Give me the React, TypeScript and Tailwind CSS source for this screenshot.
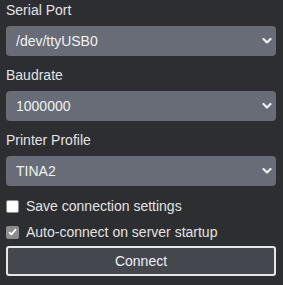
import { useState } from "react";

const font = { fontFamily: '"Liberation Sans", Arial, sans-serif' };

function Chevron() {
  return (
    <svg
      className="pointer-events-none absolute right-[4px] top-1/2 -translate-y-1/2"
      width="10"
      height="7"
      viewBox="0 0 10 7"
    >
      <path
        d="M1.5 1.5 L5 5 L8.5 1.5"
        fill="none"
        stroke="#eeeeee"
        strokeWidth="2.2"
        strokeLinecap="round"
        strokeLinejoin="round"
      />
    </svg>
  );
}

function SelectField({
  label,
  value,
  options,
  className,
}: {
  label: string;
  value: string;
  options: string[];
  className?: string;
}) {
  const [v, setV] = useState(value);
  return (
    <div className={className}>
      <div className="text-[14px] leading-[20px] text-[#e3e3e3]">{label}</div>
      <div className="relative mt-[6px]">
        <select
          value={v}
          onChange={(e) => setV(e.target.value)}
          className="block h-[30px] w-full appearance-none rounded-[4px] bg-[#676c76] pl-[10px] text-[14px] text-[#f2f2f2] outline-none"
          style={font}
        >
          {options.map((o) => (
            <option key={o}>{o}</option>
          ))}
        </select>
        <Chevron />
      </div>
    </div>
  );
}

function Check({ label, checked }: { label: string; checked: boolean }) {
  const [on, setOn] = useState(checked);
  return (
    <label
      className="flex h-[20px] cursor-pointer items-center gap-[7px] text-[14px] text-[#e3e3e3]"
      onClick={() => setOn(!on)}
    >
      {on ? (
        <span className="flex h-[13px] w-[13px] items-center justify-center rounded-[2px] bg-[#8c8c8c]">
          <svg width="9" height="8" viewBox="0 0 9 8">
            <path
              d="M1 4.2 L3.4 6.5 L8 1.2"
              fill="none"
              stroke="#ffffff"
              strokeWidth="1.8"
            />
          </svg>
        </span>
      ) : (
        <span className="h-[13px] w-[13px] rounded-[2px] border border-[#8f8f8f] bg-white" />
      )}
      <span>{label}</span>
    </label>
  );
}

export default function App() {
  return (
    <div className="h-[285px] w-[283px] bg-[#2d2e32] px-[6px] pr-[7px]" style={font}>
      <SelectField label="Serial Port" value="/dev/ttyUSB0" options={["/dev/ttyUSB0"]} />
      <SelectField
        className="mt-[9px]"
        label="Baudrate"
        value="1000000"
        options={["1000000", "250000", "115200"]}
      />
      <SelectField
        className="mt-[9px]"
        label="Printer Profile"
        value="TINA2"
        options={["TINA2"]}
      />
      <div className="mt-[10px] flex flex-col gap-[6px]">
        <Check label="Save connection settings" checked={false} />
        <Check label="Auto-connect on server startup" checked={true} />
      </div>
      <button
        className="mt-[4px] h-[30px] w-full rounded-[3px] border-2 border-[#e6e6e6] bg-[#45474f] text-[14px] text-[#f0f0f0]"
        style={font}
      >
        Connect
      </button>
    </div>
  );
}
